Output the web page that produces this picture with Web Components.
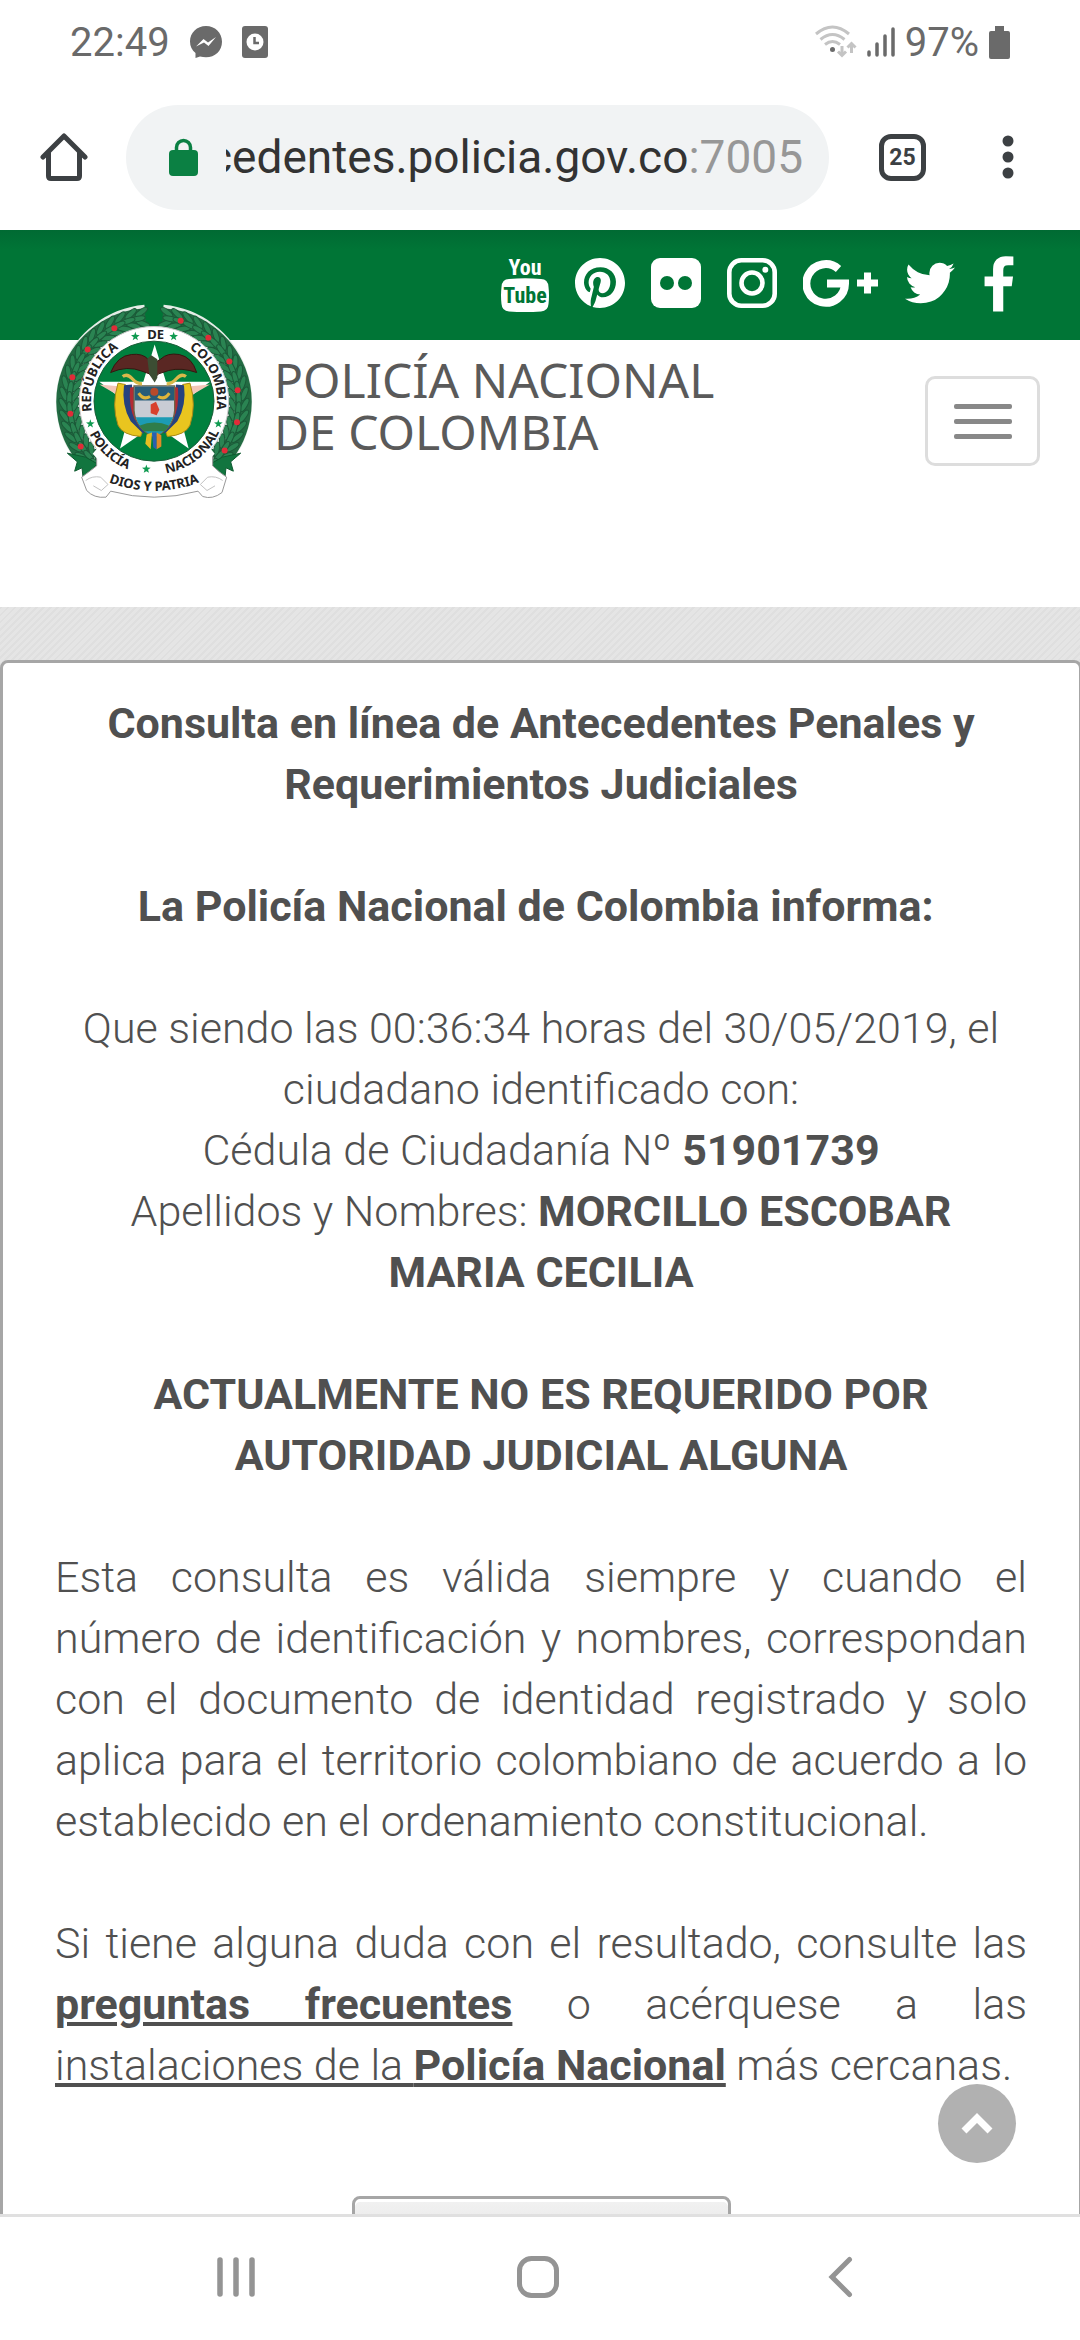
<!DOCTYPE html>
<html lang="es">
<head>
  <meta charset="utf-8">
  <meta name="viewport" content="width=device-width, initial-scale=1">
  <title>Policía Nacional de Colombia</title>
  <style>
    body {
      margin: 0;
      height: 100vh;
      display: flex;
      flex-direction: column;
      overflow: hidden;
      background: #fff;
      color: #505050;
      font-family: Roboto, "Liberation Sans", sans-serif;
    }
  </style>
</head>
<body>
  <status-bar time="22:49" battery="97%"></status-bar>
  <browser-bar host="antecedentes.policia.gov.co" port=":7005" tabs="25"></browser-bar>
  <social-bar></social-bar>
  <site-header>
    <police-crest slot="logo"></police-crest>
    <span slot="name">POLICÍA NACIONAL<br>DE COLOMBIA</span>
  </site-header>
  <consulta-page>
    <consulta-resultado
      hora="00:36:34"
      fecha="30/05/2019"
      cedula="51901739"
      apellidos="MORCILLO ESCOBAR"
      nombres="MARIA CECILIA"
    ></consulta-resultado>
  </consulta-page>
  <system-nav></system-nav>

  <script>
    class BaseElement extends HTMLElement {
      constructor() {
        super();
        this.attachShadow({ mode: "open" });
      }

      connectedCallback() {
        this.shadowRoot.innerHTML = `<style>${this.constructor.styles}</style>${this.render()}`;
      }
    }

    class StatusBar extends BaseElement {
      static get styles() {
        return /* css */`
          :host {
            display: flex;
            align-items: center;
            justify-content: space-between;
            height: 84px;
            padding: 0 70px;
            color: #6a6a6a;
            font-size: 40px;
          }
          .group { display: flex; align-items: center; }
          .left { gap: 20px; }
          .right { gap: 10px; }
          svg { display: block; }
        `;
      }

      render() {
        return /* html */`
          <div class="group left">
            <span>${this.getAttribute("time")}</span>
            <svg width="32" height="32" viewBox="0 0 32 32">
              <path fill="#6a6a6a" d="M16 0C7 0 0 6.600 0 15.500c0 4.800 2 8.700 5.500 11.500v5l4.500-1.500c2 .6 4 .8 6 .8 9 0 16-6.500 16-15.600S25 0 16 0z"/>
              <path fill="#fff" d="M6 20.500L13.500 13l4.500 3.500 8-5.500-7.500 9-4.500-3.500z"/>
            </svg>
            <svg width="26" height="32" viewBox="0 0 26 32">
              <rect width="26" height="32" rx="3" fill="#6a6a6a"/>
              <circle cx="13" cy="16" r="8.500" fill="#fff"/>
              <path d="M12.500 11v6H17" fill="none" stroke="#6a6a6a" stroke-width="2.500"/>
            </svg>
          </div>
          <div class="group right">
            <svg width="42" height="34" viewBox="0 0 42 34" fill="none" stroke="#c4c4c4" stroke-width="3">
              <path d="M1 9Q17.500-5 34 9M5.500 14.500Q17.500 4.500 29.500 14.500M10 19.500Q17.500 13.500 25 19.500"/>
              <path d="M27 21v9M23 26.500l4 4 4-4M36.500 28v-9M32.500 22.500l4-4 4 4"/>
              <circle cx="17.500" cy="24.500" r="2.500" fill="#6a6a6a" stroke="none"/>
            </svg>
            <svg width="28" height="32" viewBox="0 0 28 32" stroke="#6a6a6a" stroke-width="3.500" stroke-linecap="round">
              <path d="M2 26v3M10 18v11M18 10v19M26 3v26"/>
            </svg>
            <span>${this.getAttribute("battery")}</span>
            <svg width="21" height="33" viewBox="0 0 21 33">
              <path fill="#6a6a6a" d="M6 0h9v5h4q2 0 2 2v24q0 2-2 2H2q-2 0-2-2V7q0-2 2-2h4z"/>
            </svg>
          </div>`;
      }
    }

    class BrowserBar extends BaseElement {
      static get styles() {
        return /* css */`
          :host {
            display: flex;
            align-items: center;
            height: 146px;
            padding: 0 38px 0 40px;
            box-sizing: border-box;
          }
          button {
            display: flex;
            align-items: center;
            justify-content: center;
            padding: 0;
            border: 0;
            background: none;
            color: #3c4043;
            font: inherit;
          }
          form {
            display: flex;
            align-items: center;
            flex: 1;
            min-width: 0;
            height: 105px;
            margin: 0 50px 0 38px;
            padding: 0 26px 0 43px;
            box-sizing: border-box;
            border-radius: 53px;
            background: #f1f3f4;
            font-size: 46px;
          }
          input {
            flex: 1;
            min-width: 0;
            height: 60px;
            margin-left: 28px;
            padding: 0;
            border: 0;
            outline: 0;
            background: none;
            color: #333;
            font: inherit;
            /* keeps the end of a long host in view */
            direction: rtl;
          }
          .port { color: #979797; }
          .tabs {
            width: 47px;
            height: 47px;
            border: 5px solid #3c4043;
            border-radius: 12px;
            box-sizing: border-box;
            font-size: 23px;
            font-weight: 700;
          }
          .menu { width: 12px; margin: 0 28px 0 76px; }
        `;
      }

      render() {
        return /* html */`
          <button aria-label="Inicio">
            <svg width="48" height="48" viewBox="0 0 48 48" fill="none" stroke="#3c4043" stroke-width="5" stroke-linecap="round" stroke-linejoin="round">
              <path d="M3 24L24 3l21 21M8.500 20v23q0 2.500 2.500 2.500h26q2.500 0 2.500-2.500V20"/>
            </svg>
          </button>
          <form>
            <svg width="29" height="38" viewBox="0 0 29 38">
              <rect y="12" width="29" height="26" rx="4" fill="#0b8043"/>
              <path d="M7.500 14V9.500a7 7 0 0 1 14 0V14" fill="none" stroke="#0b8043" stroke-width="3.500"/>
            </svg>
            <input type="text" aria-label="Dirección" value="${this.getAttribute("host")}">
            <span class="port">${this.getAttribute("port")}</span>
          </form>
          <button class="tabs" aria-label="Pestañas">${this.getAttribute("tabs")}</button>
          <button class="menu" aria-label="Menú">
            <svg width="12" height="44" viewBox="0 0 12 44" fill="#3c4043">
              <circle cx="6" cy="6" r="5.500"/><circle cx="6" cy="22" r="5.500"/><circle cx="6" cy="38" r="5.500"/>
            </svg>
          </button>`;
      }
    }

    class SocialBar extends BaseElement {
      static get styles() {
        return /* css */`
          :host {
            display: flex;
            align-items: center;
            justify-content: flex-end;
            gap: 26px;
            height: 110px;
            padding: 0 63px 4px 0;
            box-sizing: border-box;
            background: linear-gradient(#006a33, #007536 20px);
          }
          a, svg { display: block; }
          text { font-family: "Liberation Sans Narrow", "Roboto Condensed", Roboto, sans-serif; font-weight: 700; }
        `;
      }

      render() {
        return /* html */`
          <a href="#" aria-label="YouTube">
            <svg width="48" height="58" viewBox="0 0 48 58">
              <text x="24" y="21" font-size="22" text-anchor="middle" fill="#fff">You</text>
              <path fill="#fff" d="M8 25Q24 23.500 40 25q7 0 7.500 8 1 8.500 0 17-.5 7-7.500 7.500-16 1-32 0Q1 57 .5 50q-1-8.500 0-17Q1 25 8 25z"/>
              <text x="24" y="49" font-size="22" text-anchor="middle" fill="#007536">Tube</text>
            </svg>
          </a>
          <a href="#" aria-label="Pinterest">
            <svg width="50" height="50" viewBox="0 8 496 496" fill="#fff">
              <path d="M496 256c0 137-111 248-248 248-25.600 0-50.200-3.900-73.400-11.100 10.100-16.500 25.200-43.500 30.800-65 3-11.600 15.400-59 15.400-59 8.100 15.400 31.700 28.500 56.800 28.500 74.800 0 128.700-68.800 128.700-154.300 0-81.900-66.900-143.200-152.900-143.200-107 0-163.900 71.800-163.900 150.100 0 36.400 19.400 81.700 50.300 96.100 4.700 2.200 7.200 1.200 8.300-3.300.8-3.400 5-20.300 6.900-28.100.6-2.500.3-4.700-1.700-7.100-10.100-12.500-18.300-35.300-18.300-56.600 0-54.700 41.400-107.600 112-107.600 60.900 0 103.600 41.500 103.600 100.900 0 67.100-33.900 113.600-78 113.600-24.300 0-42.600-20.100-36.700-44.800 7-29.500 20.500-61.300 20.500-82.600 0-19-10.200-34.900-31.400-34.900-24.900 0-44.900 25.700-44.900 60.200 0 22 7.400 36.800 7.400 36.800s-24.500 103.800-29 123.200c-5 21.400-3 51.600-.9 71.200C65.400 450.900 0 361.100 0 256 0 119 111 8 248 8s248 111 248 248z"/>
            </svg>
          </a>
          <a href="#" aria-label="Flickr">
            <svg width="50" height="50" viewBox="0 0 50 50">
              <rect width="50" height="50" rx="9" fill="#fff"/>
              <circle cx="16" cy="25" r="7" fill="#007536"/><circle cx="34" cy="25" r="7" fill="#007536"/>
            </svg>
          </a>
          <a href="#" aria-label="Instagram">
            <svg width="50" height="50" viewBox="0 0 50 50" fill="none" stroke="#fff">
              <rect x="2.300" y="2.300" width="45.400" height="45.400" rx="12" stroke-width="4.600"/>
              <circle cx="25" cy="25" r="10.500" stroke-width="4.600"/>
              <circle cx="38.300" cy="11.700" r="3" fill="#fff" stroke="none"/>
            </svg>
          </a>
          <a href="#" aria-label="Google Plus">
            <svg width="76" height="50" viewBox="0 0 76 50" fill="none" stroke="#fff">
              <path d="M35.500 11A19.300 19.300 0 1 0 42 25.600H24" stroke-width="8"/>
              <path d="M54 25h21M64.500 14.500v21" stroke-width="7"/>
            </svg>
          </a>
          <a href="#" aria-label="Twitter">
            <svg width="50" height="50" viewBox="108 108 1576 1576" fill="#fff">
              <path d="M1684 408q-67 98-162 167 1 14 1 42 0 130-38 259.500t-115.500 248.500-184.500 210.500-258 146-323 54.500q-271 0-496-145 35 4 78 4 225 0 401-138-105-2-188-64.500t-114-159.500q33 5 61 5 43 0 85-11-112-23-185.500-111.500t-73.500-205.500v-4q68 38 146 41-66-44-105-115t-39-154q0-88 44-163 121 149 294.500 238.500t371.500 99.500q-8-38-8-74 0-134 94.500-228.500t228.500-94.500q140 0 236 102 109-21 205-78-37 115-142 178 93-10 186-50z"/>
            </svg>
          </a>
          <a href="#" aria-label="Facebook">
            <svg width="36" height="58" viewBox="372 -64 1080 1740" fill="#fff">
              <path d="M1343 12v264h-157q-86 0-116 36t-30 108v189h293l-39 296h-254v759h-306v-759h-255v-296h255v-218q0-186 104-288.500t277-102.500q147 0 228 12z"/>
            </svg>
          </a>`;
      }
    }

    class PoliceCrest extends BaseElement {
      static get styles() {
        return /* css */`
          :host { display: block; }
          svg { display: block; width: 200px; height: 197px; }
          text { font-family: "Noto Sans", sans-serif; font-weight: 700; font-size: 39px; fill: #222; }
        `;
      }

      // three staggered rows of leaves per side, from the top gap down to the ribbon
      leaves() {
        let out = "";
        for (const side of [-1, 1]) {
          for (let deg = 8; deg < 140; deg += 7) {
            [272, 236, 254].forEach((r, row) => {
              const a = (deg + (row === 2 ? 3 : 0)) * side * Math.PI / 180;
              const x = Math.round(370 + r * Math.sin(a));
              const y = Math.round(364 - r * Math.cos(a));
              const turn = Math.round(a * 180 / Math.PI + side * (row === 0 ? -62 : row === 1 ? -118 : -90));
              out += `<ellipse cx="${x}" cy="${y}" rx="8" ry="22" transform="rotate(${turn} ${x} ${y})"/>`;
            });
          }
        }
        return out;
      }

      berries() {
        return [[251, 143], [171, 207], [125, 290], [119, 400], [150, 498], [450, 121], [533, 172], [596, 243], [621, 329], [619, 425], [582, 510]]
          .map(([x, y]) => `<circle cx="${x}" cy="${y}" r="9"/>`).join("");
      }

      star(x, y, r) {
        const points = [];
        for (let i = 0; i < 10; i++) {
          const d = i % 2 ? r * 0.4 : r;
          const a = i * Math.PI / 5;
          points.push(`${Math.round(x + d * Math.sin(a))},${Math.round(y - d * Math.cos(a))}`);
        }
        return `<polygon points="${points.join(" ")}"/>`;
      }

      render() {
        return /* html */`
          <svg viewBox="70 65 600 590" role="img" aria-label="Escudo de la Policía Nacional">
            <defs>
              <path id="top" d="M184 394A189 189 0 1 1 556 394"/>
              <path id="bottom" d="M168 440A215 215 0 0 0 572 440"/>
              <path id="motto" d="M206 594Q370 668 534 594"/>
            </defs>
            <path d="M342 82A283 283 0 0 0 160 556M398 82A283 283 0 0 1 580 556" fill="none" stroke="#e4ece6" stroke-width="18"/>
            <path d="M344 108A257 257 0 0 0 176 545M396 108A257 257 0 0 1 564 545" fill="none" stroke="#226b42" stroke-width="50"/>
            <g fill="#2a8452" stroke="#1b5938" stroke-width="3">${this.leaves()}</g>
            <g fill="#12753f" stroke="#0d5a2f" stroke-width="3">
              <path d="M110 518l55 12 35 20-42 48-4-36-22 10 8-28z"/>
              <path d="M630 518l-55 12-35 20 42 48 4-36 22 10-8-28z"/>
            </g>
            <g fill="#e02c38">${this.berries()}</g>
            <circle cx="370" cy="362" r="224" fill="#fff" stroke="#c5c5c5" stroke-width="3"/>
            <g fill="#fff" stroke="#999" stroke-width="3" stroke-linejoin="round">
              <path d="M153 590q20-14 45-34v-35Q370 620 546 521v35q20 20 42 34l-14 46q-28 22-58 12l-14-16Q370 668 240 632l-14 18q-36 4-58-20z"/>
              <path d="M165 600q20-15 45-10l22 22-20 18-24-14M576 600q-20-15-45-10l-22 22 20 18 24-14" fill="none" stroke="#c2c2c2"/>
            </g>
            <path d="M186 520A237 237 0 0 0 552 520L520 480H220z" fill="#fff"/>
            <circle cx="370" cy="362" r="180" fill="#00803e" stroke="#1b5e39" stroke-width="3"/>
            <g fill="#0f9a50">${this.star(314, 168, 14)}${this.star(429, 168, 14)}${this.star(179, 430, 14)}${this.star(563, 430, 14)}${this.star(347, 566, 14)}</g>
            <text><textPath href="#top" startOffset="2">REPÚBLICA</textPath></text>
            <text x="375" y="175" text-anchor="middle">DE</text>
            <text text-anchor="end"><textPath href="#top" startOffset="99%">COLOMBIA</textPath></text>
            <text><textPath href="#bottom" startOffset="22">POLICÍA</textPath></text>
            <text text-anchor="end"><textPath href="#bottom" startOffset="97%">NACIONAL</textPath></text>
            <text text-anchor="middle"><textPath href="#motto" startOffset="50%">DIOS Y PATRIA</textPath></text>
            <path fill="#fff" d="M372 192l34 112h132l-98 74 34 126-102-72-104 72 34-126-96-74h132z"/>
            <path d="M206 312l92 8-40 22zM538 312l-92 8 40 22z" fill="#f3c6b8"/>
            <path fill="#e9c51f" stroke="#a98816" stroke-width="3" d="M262 308q-20 66 0 126 14 30 68 34l8-22-48-60-6-74zM478 308q20 66 0 126-14 30-68 34l-8-22 48-60 6-74z"/>
            <path fill="#26427f" d="M280 314q-8 60 20 108l38 38 10-16-40-58-4-74zM460 314q8 60-20 108l-38 38-10-16 40-58 4-74z"/>
            <path fill="#b22a34" d="M298 322q-4 60 14 94l28 34 8-18-26-52-8-62zM442 322q4 60-14 94l-28 34-8-18 26-52 8-62z"/>
            <path fill="#c8ccd4" stroke="#6b6347" stroke-width="4" d="M310 316h122v74q-4 54-61 80-57-26-61-80z"/>
            <path fill="#285c78" d="M312 318h118v42H312z"/>
            <path fill="none" stroke="#e0b53a" stroke-width="9" d="M324 338q14 22 34 10M416 338q-14 22-34 10"/>
            <circle cx="371" cy="334" r="12" fill="#b84a2a"/>
            <path fill="#d8402c" d="M360 372l16-8 10 24-8 16-18-6z"/>
            <path fill="#1c9bb4" d="M315 410h112q-12 40-56 59-44-19-56-59z"/>
            <path fill="#2f7d4a" d="M326 436q45-20 90 0l-14 16h-62z"/>
            <path fill="#e6be22" d="M348 462l16-6-4 50-16-16z"/>
            <path fill="#2b5fb0" d="M364 456h14v52l-10-8z"/>
            <path fill="#e08a28" d="M378 456l14 8v34l-14 8z"/>
            <path fill="#5a2723" stroke="#35160f" stroke-width="3" d="M240 276q20-50 62-54 34-4 50 14l14 8h10l14-8q20-20 56-14 38 8 52 54-46-16-84-6l-30 10-14 14-14-14-22-8q-44-18-94 4z"/>
            <path fill="#3c4d33" d="M350 234l12-10 18 12 0 56-8 14-16-24z"/>
            <path fill="none" stroke="#d9b84a" stroke-width="10" d="M276 288q14-10 28 6t30 16M466 288q-14-10-28 6t-30 16"/>
          </svg>`;
      }
    }

    class SiteHeader extends BaseElement {
      static get styles() {
        return /* css */`
          :host {
            display: flex;
            align-items: flex-start;
            height: 267px;
            padding: 0 40px 0 54px;
            box-sizing: border-box;
          }
          /* the crest hangs over the green bar */
          .logo { margin-top: -38px; }
          .name {
            flex: 1;
            margin: 14px 0 0 20px;
            color: #5a5a5a;
            font-family: "Noto Sans", sans-serif;
            font-size: 48px;
            line-height: 52px;
          }
          button {
            display: flex;
            flex-direction: column;
            align-items: center;
            justify-content: center;
            gap: 10px;
            width: 115px;
            height: 90px;
            margin-top: 36px;
            padding: 0;
            border: 3px solid #ddd;
            border-radius: 10px;
            background: none;
          }
          i {
            width: 58px;
            height: 5px;
            border-radius: 2px;
            background: #888;
          }
        `;
      }

      render() {
        return /* html */`
          <div class="logo"><slot name="logo"></slot></div>
          <div class="name"><slot name="name"></slot></div>
          <button aria-label="Menú"><i></i><i></i><i></i></button>`;
      }
    }

    class ConsultaPage extends BaseElement {
      static get styles() {
        return /* css */`
          :host {
            display: block;
            position: relative;
            flex: 1;
            min-height: 0;
            overflow: hidden;
            padding-top: 53px;
            background: repeating-linear-gradient(135deg, #dfdfdf 0 2px, #e5e5e5 2px 5px);
          }
          .top {
            position: absolute;
            right: 64px;
            bottom: 51px;
            display: flex;
            align-items: center;
            justify-content: center;
            width: 78px;
            height: 79px;
            padding: 0;
            border: 0;
            border-radius: 50%;
            background: #b1b1b1;
          }
        `;
      }

      render() {
        return /* html */`
          <slot></slot>
          <button class="top" aria-label="Subir">
            <svg width="32" height="22" viewBox="0 0 32 22" fill="none" stroke="#fff" stroke-width="7">
              <path d="M3 18L16 5l13 13"/>
            </svg>
          </button>`;
      }
    }

    class ConsultaResultado extends BaseElement {
      static get styles() {
        return /* css */`
          :host {
            display: block;
            min-height: 100%;
            /* the card is slightly wider than the screen */
            margin-right: -2px;
            padding: 30px 52px;
            box-sizing: border-box;
            border: 3px solid #a6a6a6;
            border-radius: 8px;
            background: #fff;
            font-size: 43px;
            font-weight: 300;
            line-height: 61px;
            text-align: center;
          }
          h1, h2, p { margin: 0 0 61px; font-size: inherit; }
          h1, h2, b { font-weight: 700; }
          .aviso { text-align: justify; }
          .aviso:last-of-type { margin-bottom: 100px; }
          a {
            color: inherit;
            text-decoration: underline 4px;
            text-underline-offset: 3px;
          }
          .volver {
            display: block;
            width: 379px;
            height: 90px;
            margin: 0 auto;
            border: 3px solid #a6a6a6;
            border-radius: 8px;
            background: linear-gradient(#f2f2f2, #d8d8d8);
            box-shadow: inset 0 3px #fff;
          }
        `;
      }

      render() {
        const get = (name) => this.getAttribute(name);
        return /* html */`
          <h1>Consulta en línea de Antecedentes Penales y Requerimientos Judiciales</h1>
          <h2>La Policía Nacional de Colombia informa:&nbsp;</h2>
          <p>
            Que siendo las ${get("hora")} horas del ${get("fecha")}, el ciudadano identificado con:<br>
            Cédula de Ciudadanía Nº <b>${get("cedula")}</b><br>
            Apellidos y Nombres: <b>${get("apellidos")}<br>${get("nombres")}</b>
          </p>
          <h2>ACTUALMENTE NO ES REQUERIDO POR AUTORIDAD JUDICIAL ALGUNA</h2>
          <p class="aviso">Esta consulta es válida siempre y cuando el número de identificación y nombres, correspondan con el documento de identidad registrado y solo aplica para el territorio colombiano de acuerdo a lo establecido en el ordenamiento constitucional.</p>
          <p class="aviso">Si tiene alguna duda con el resultado, consulte las <a href="#"><b>preguntas frecuentes</b></a> o acérquese a las <a href="#">instalaciones de la <b>Policía Nacional</b></a> más cercanas.</p>
          <button class="volver" aria-label="Volver"></button>`;
      }
    }

    class SystemNav extends BaseElement {
      static get styles() {
        return /* css */`
          :host {
            display: grid;
            grid-template-columns: repeat(3, 1fr);
            height: 126px;
            padding: 0 89px 3px 85px;
            box-sizing: border-box;
            border-top: 3px solid #e0e0e0;
            background: #fff;
          }
          button {
            display: flex;
            align-items: center;
            justify-content: center;
            padding: 0;
            border: 0;
            background: none;
          }
        `;
      }

      render() {
        return /* html */`
          <button aria-label="Recientes">
            <svg width="42" height="42" viewBox="0 0 42 42" stroke="#949494" stroke-width="5.500" stroke-linecap="round">
              <path d="M5 4v34M21 4v34M37 4v34"/>
            </svg>
          </button>
          <button aria-label="Inicio">
            <svg width="42" height="42" viewBox="0 0 42 42" fill="none" stroke="#949494" stroke-width="5">
              <rect x="2.500" y="2.500" width="37" height="37" rx="12"/>
            </svg>
          </button>
          <button aria-label="Atrás">
            <svg width="42" height="42" viewBox="0 0 42 42" fill="none" stroke="#949494" stroke-width="5" stroke-linecap="round">
              <path d="M30.500 3.500L13 21l17.500 17.500"/>
            </svg>
          </button>`;
      }
    }

    customElements.define("status-bar", StatusBar);
    customElements.define("browser-bar", BrowserBar);
    customElements.define("social-bar", SocialBar);
    customElements.define("police-crest", PoliceCrest);
    customElements.define("site-header", SiteHeader);
    customElements.define("consulta-page", ConsultaPage);
    customElements.define("consulta-resultado", ConsultaResultado);
    customElements.define("system-nav", SystemNav);
  </script>
</body>
</html>
